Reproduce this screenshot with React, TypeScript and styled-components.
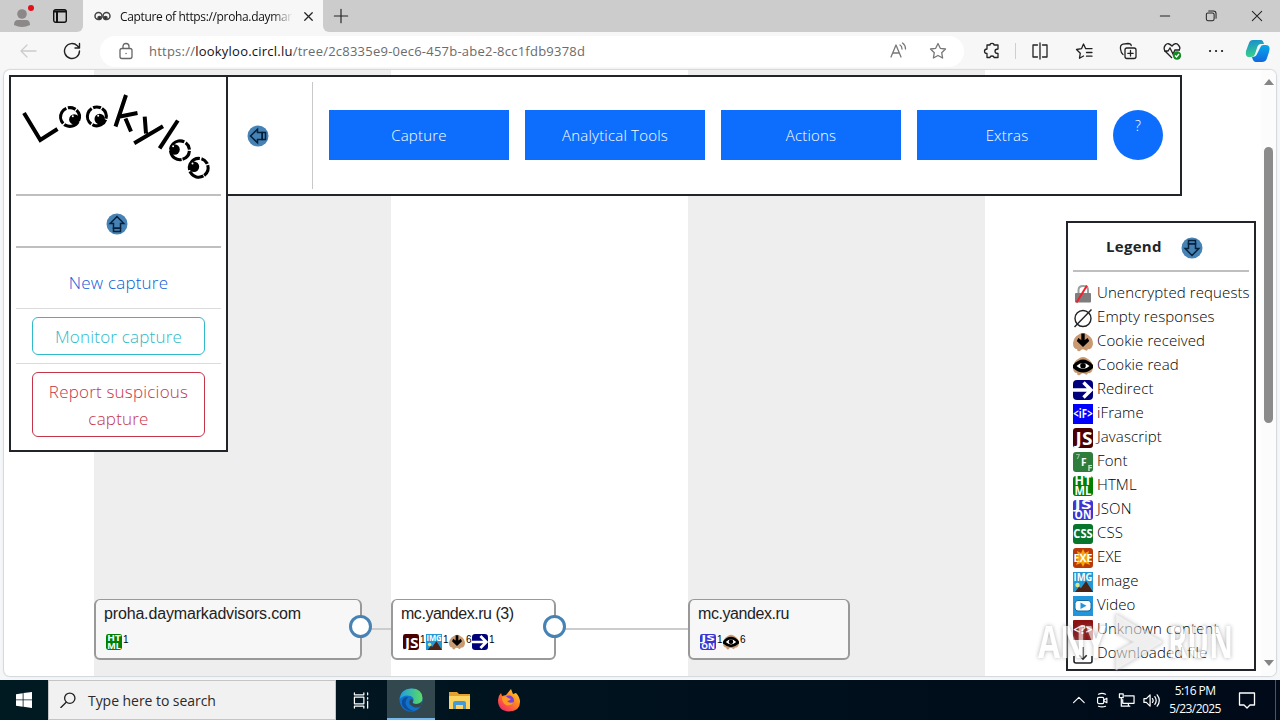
import type { ReactNode } from "react";
import { styled, createGlobalStyle } from "styled-components";

const GlobalStyle = createGlobalStyle`
    * { box-sizing: border-box; }
    body {
        margin: 0;
        overflow: hidden;
        font-family: "Open Sans", "Noto Sans", sans-serif;
    }
    svg { display: block; flex: none; }
`;

const Screen = styled.div`
    display: flex;
    flex-direction: column;
    width: 1280px;
    height: 720px;
    background: #f4f6f8;
`;

/* browser */

const TabBar = styled.div`
    display: flex;
    height: 32px;
    background: #f7f7f7;
`;

const TabBarLeft = styled.div`
    display: flex;
    align-items: center;
    gap: 19px;
    width: 83px;
    padding-left: 13px;
    background: #cccccc;
    border-radius: 0 0 6px 0;
`;

const Tab = styled.div`
    display: flex;
    align-items: center;
    width: 240px;
    padding: 0 7px 0 11px;
`;

const TabTitle = styled.div`
    flex: 1;
    margin: 0 8px 0 9px;
    overflow: hidden;
    white-space: nowrap;
    font-size: 12px;
    letter-spacing: -0.35px;
    color: #111;
    mask-image: linear-gradient(to right, #000 88%, transparent);
`;

const TabBarRight = styled.div`
    display: flex;
    flex: 1;
    align-items: center;
    justify-content: space-between;
    padding: 0 16px 0 10px;
    background: #cccccc;
    border-radius: 0 0 0 6px;
`;

const WindowButtons = styled.div`
    display: flex;
    gap: 32px;
`;

const Toolbar = styled.div`
    display: flex;
    align-items: center;
    height: 38px;
    background: #f7f7f7;
`;

const ToolbarButtons = styled.div`
    display: flex;
    align-items: center;
    gap: 26px;
    width: 100px;
    padding-left: 19px;
`;

const AddressBar = styled.div`
    display: flex;
    align-items: center;
    width: 864px;
    height: 31px;
    padding: 0 17px;
    border-radius: 16px;
    background: #fff;
`;

const Address = styled.div`
    flex: 1;
    margin-left: 14px;
    font-size: 13px;
    letter-spacing: 0.23px;
    color: #6b6b6b;

    b {
        font-weight: 400;
        color: #111;
    }
`;

const AddressIcons = styled.div`
    display: flex;
    gap: 22px;
`;

const ToolbarActions = styled.div`
    display: flex;
    align-items: center;
    gap: 26px;
    padding-left: 19px;

    svg:last-child { margin-left: -6px; }
`;

const Separator = styled.div`
    width: 1px;
    height: 16px;
    margin: 0 -11px 0 -12px;
    background: #cfcfcf;
`;

const Viewport = styled.div`
    position: relative;
    display: flex;
    height: 606px;
    margin: 0 4px 4px;
    overflow: hidden;
    background: #fff;
    border-radius: 6px;
    box-shadow: 0 0 1px 1px #d4d7da;
`;

const Stripes = styled.div`
    display: grid;
    flex: 1;
    grid-template-columns: 297px 297px 297px;
    margin-left: 90px;
`;

const Stripe = styled.div<{ $gray?: boolean }>`
    background: ${({ $gray }) => ($gray ? "#eeeeee" : "#ffffff")};
`;

const Scrollbar = styled.div`
    display: flex;
    flex-direction: column;
    align-items: center;
    width: 15px;
    padding: 9px 0 10px;
    background: #fcfcfc;
`;

const ScrollThumb = styled.div`
    width: 9px;
    height: 276px;
    margin: 62px 0 auto;
    border-radius: 5px;
    background: #8b8b8b;
`;

/* tree nodes on the canvas */

const Node = styled.div<{ $x: number; $width: number }>`
    position: absolute;
    left: ${({ $x }) => $x}px;
    top: 529px;
    width: ${({ $width }) => $width}px;
    height: 61px;
    padding: 5px 8px;
    border: 2px solid #999;
    border-top-width: 1.5px;
    border-radius: 6px;
    background: rgba(255, 255, 255, 0.5);
`;

const NodeName = styled.div<{ $spacing: number }>`
    height: 18px;
    white-space: nowrap;
    font: 16px/18px "Liberation Sans", sans-serif;
    letter-spacing: ${({ $spacing }) => $spacing}px;
    color: #222;
`;

const NodeIcons = styled.div`
    display: flex;
    gap: 1px;
    margin: 11px 0 0 2px;
`;

const NodeIcon = styled.div`
    display: flex;
    gap: 1px;
    width: 22px;
    font: 10px/12px "Liberation Sans", sans-serif;
    color: #000;
`;

const Link = styled.div<{ $x: number; $width: number }>`
    position: absolute;
    left: ${({ $x }) => $x}px;
    top: 558px;
    width: ${({ $width }) => $width}px;
    height: 2px;
    background: #ccc;
`;

const NodeToggle = styled.div<{ $x: number }>`
    position: absolute;
    left: ${({ $x }) => $x}px;
    top: 545px;
    width: 23px;
    height: 23px;
    border: 3px solid steelblue;
    border-radius: 50%;
    background: #fff;
`;

/* floating panels */

const Panel = styled.div`
    position: absolute;
    border: 2px solid #212529;
    background: #fff;
    color: #212529;
`;

const SidePanel = styled(Panel)`
    left: 5px;
    top: 5px;
    display: flex;
    flex-direction: column;
    align-items: center;
    width: 219px;
    height: 377px;
    padding: 5px;
`;

const MenuPanel = styled(Panel)`
    left: 222px;
    top: 5px;
    display: flex;
    align-items: flex-start;
    gap: 16px;
    width: 956px;
    height: 121px;
    padding: 5px 16px 5px 0;
`;

const MenuHandle = styled.div`
    display: flex;
    align-items: center;
    width: 85px;
    height: 107px;
    padding: 0 0 0 19px;
    border-right: 1px solid #c8c8c8;
`;

const MenuButton = styled.div`
    width: 180px;
    height: 50px;
    margin-top: 28px;
    background: #0d6efd;
    color: #fff;
    font-size: 15px;
    font-weight: 300;
    line-height: 51px;
    letter-spacing: 0.2px;
    text-align: center;
`;

const HelpButton = styled(MenuButton)`
    width: 50px;
    border-radius: 50%;
    font-size: 14px;
    line-height: 31px;
`;

const Rule = styled.div<{ $thin?: boolean }>`
    width: 100%;
    height: ${({ $thin }) => ($thin ? 1 : 2)}px;
    background: ${({ $thin }) => ($thin ? "#dcdcdc" : "#bfbfbf")};
`;

const LogoArea = styled.div`
    height: 112px;
`;

const HandleArea = styled.div`
    display: flex;
    align-items: center;
    justify-content: center;
    width: 100%;
    height: 51px;
    padding: 6px 3px 0 0;
`;

const SideLink = styled.div`
    height: 60px;
    padding-top: 21px;
    font-size: 17px;
    font-weight: 300;
    line-height: 27px;
    letter-spacing: 0.2px;
    color: #0b5ed7;
`;

const OutlineButton = styled.div<{ $color: string }>`
    width: 173px;
    margin: 8px 0;
    padding: 4.5px 8px;
    border: 1px solid ${({ $color }) => $color};
    border-radius: 6px;
    color: ${({ $color }) => $color};
    font-size: 17px;
    font-weight: 300;
    line-height: 27px;
    letter-spacing: 0.2px;
    text-align: center;
`;

const LegendPanel = styled(Panel)`
    left: 1062px;
    top: 151px;
    width: 190px;
    height: 450px;
    padding: 5px;
`;

const LegendHeader = styled.div`
    display: flex;
    align-items: center;
    gap: 19px;
    height: 42px;
    padding: 0 0 6px 33px;
    font-size: 15px;
    font-weight: 700;
    letter-spacing: 0.3px;

    svg { margin-top: 4px; }
`;

const LegendList = styled.div`
    margin-top: 8px;
`;

const LegendRow = styled.div`
    display: flex;
    align-items: center;
    gap: 4px;
    height: 24px;
    white-space: nowrap;
    font-size: 15px;
    font-weight: 300;
    line-height: 24px;
    letter-spacing: 0.1px;
    color: #000;

    svg { margin-top: 4px; }
`;

const Watermark = styled.svg`
    position: absolute;
    left: 1030px;
    top: 538px;
    opacity: 0.65;
    filter: drop-shadow(0 0 2px #888);
`;

/* windows taskbar */

const Taskbar = styled.div`
    display: flex;
    height: 40px;
    background: linear-gradient(to right, #001a22, #00121e 50%, #000a18);
`;

const TaskbarButton = styled.div<{ $active?: boolean; $width?: number }>`
    display: flex;
    align-items: center;
    justify-content: center;
    width: ${({ $width = 49 }) => $width}px;
    height: 40px;
    background: ${({ $active }) => ($active ? "#33474e" : "transparent")};
    box-shadow: ${({ $active }) => ($active ? "inset 0 -2px #76b9ed" : "none")};
`;

const SearchBox = styled.div`
    display: flex;
    align-items: center;
    gap: 12px;
    width: 288px;
    padding-left: 11px;
    border: 1px solid #c4c4c4;
    background: #f1f1f1;
    color: #2a2a2a;
    font-size: 14px;
    letter-spacing: -0.05px;
`;

const Tray = styled.div`
    display: flex;
    align-items: center;
    gap: 8px;
    margin-left: auto;
    padding-right: 4px;
    color: #fff;
`;

const Clock = styled.div`
    width: 54px;
    margin-right: 8px;
    font-size: 12px;
    line-height: 18px;
    letter-spacing: -0.6px;
    text-align: center;
    white-space: nowrap;
`;

const TrayEdge = styled.div`
    width: 1px;
    height: 40px;
    margin-left: 11px;
    background: #4a5560;
`;

function Icon({ size = 18, color = "#222", width = 1.3, children }: IconProps) {
    return (
        <svg width={size} height={size} viewBox="0 0 18 18" fill="none" stroke={color}
            strokeWidth={width} strokeLinecap="round" strokeLinejoin="round">
            {children}
        </svg>
    )
}

function HandleIcon({ angle }: { angle: number }) {
    return (
        <svg width="22" height="22" viewBox="0 0 22 22">
            <circle cx="11" cy="11" r="10.5" fill="steelblue" />
            <g transform={`rotate(${angle} 11 11)`} fill="none" stroke="#06213c" strokeWidth="1.5">
                <path d="M11 3.5 4.2 10.5h3.3v4.7h7v-4.7h3.3z" />
                <path d="M7.5 15.2h7v3.3h-7z" />
            </g>
        </svg>
    )
}

function Eye({ x, y, px, py, turn }: EyeProps) {
    return (
        <g>
            <circle cx={x} cy={y} r="9.4" fill="none" stroke="#000" strokeWidth="3.1"
                strokeDasharray="16 1.4 18 1.6 8 1.3 11.4 1.4" transform={`rotate(${turn} ${x} ${y})`} />
            <circle cx={px} cy={py} r="5.2" fill="#000" />
            <circle cx={px - 1.5} cy={py - 3.2} r="1" fill="#fff" />
        </g>
    )
}

function Logo() {
    return (
        <svg width="205" height="112" viewBox="16 82 205 112">
            <g fill="none" stroke="#000" strokeWidth="4">
                <path d="M24 113 40.3 140 57.5 129" />
                <path d="M126 95 115.5 126.5M117.5 117 137.5 113M125.5 118.5 131 131.5" />
                <path d="M144.7 116.7 146 133.5M163 126.3 134.2 143.3" />
                <path d="M177.8 120.5 159.6 148.3" />
            </g>
            <Eye x={70} y={117} px={74.3} py={119.4} turn={30} />
            <Eye x={96.8} y={116.4} px={99.7} py={119} turn={20} />
            <Eye x={180} y={150.3} px={174.6} py={149.5} turn={80} />
            <Eye x={198.7} y={167.8} px={194} py={166.7} turn={60} />
        </svg>
    )
}

function TextIcon({ size, bg, lines, fontSize, radius = 3 }: TextIconProps) {
    const top = lines.length === 1 ? [14.3] : [9.2, 19.2];
    return (
        <svg width={size} height={size} viewBox="0 0 20 20">
            <rect width="20" height="20" rx={radius} fill={bg} />
            {lines.map((line, i) => (
                <text key={line} x="10" y={top[i]} fill="#fff" textAnchor="middle" fontWeight="700"
                    fontFamily="Open Sans" fontSize={fontSize} textLength={line.length > 2 ? 19.5 : 17}
                    lengthAdjust="spacingAndGlyphs">{line}</text>
            ))}
        </svg>
    )
}

function Cookie({ size, children }: { size: number; children: ReactNode }) {
    return (
        <svg width={size} height={size} viewBox="0 0 20 20">
            <path d="M5 3Q10-1 15 3q5 3 5 9-1 6-5 5-1 3-3 1-3-2-5 1-3 1-3-2Q0 17 0 11 1 5 5 3z" fill="#c99a72" />
            {children}
        </svg>
    )
}

function ResourceIcon({ type, size = 20 }: { type: string; size?: number }) {
    switch (type) {
        case "insecure":
            return (
                <svg width={size} height={size} viewBox="0 0 20 20">
                    <path d="M5.5 10V6q0-4 4.7-4 4.8 0 4.8 4v4" fill="none" stroke="#98a0a0" strokeWidth="2" />
                    <rect x="2" y="9" width="16" height="9.5" rx="1" fill="#7d7d7d" />
                    <path d="M14 1.500 3.500 18.500" stroke="#f0202d" strokeWidth="2" />
                </svg>
            )
        case "empty":
            return (
                <svg width={size} height={size} viewBox="0 0 20 20" fill="none" stroke="#222" strokeWidth="1.4">
                    <circle cx="10" cy="10.5" r="8" />
                    <path d="M18.5 1.5 1.5 19" />
                </svg>
            )
        case "received":
            return <Cookie size={size}><path d="M8.300 1.500h3.400v6.500l3-2 1.500 3L10 15 3.800 9l1.500-3 3 2z" fill="#000" /></Cookie>
        case "read":
            return (
                <Cookie size={size}>
                    <path d="M0 9Q10-2 20 9v3Q10 21 0 12z" fill="#000" />
                    <path d="M3.5 10Q10 4 16.5 10 10 16 3.5 10z" fill="#fff" />
                    <circle cx="10" cy="9.8" r="2.8" fill="#000" />
                </Cookie>
            )
        case "redirect":
            return (
                <svg width={size} height={size} viewBox="0 0 20 20">
                    <rect width="20" height="20" rx="4" fill="#00007c" />
                    <path d="M0 10h17M10.5 2.500l7.500 7.500-7.500 7.500" fill="none" stroke="#fff" strokeWidth="3.4" />
                </svg>
            )
        case "iframe":
            return <TextIcon size={size} bg="#0000ff" lines={["<iF>"]} fontSize={12} radius={0} />
        case "js":
            return (
                <svg width={size} height={size} viewBox="0 0 20 20">
                    <rect width="20" height="20" rx="3" fill="#480000" />
                    <text x="2.500" y="17" fill="#fff" fontFamily="Open Sans" fontWeight="700" fontSize="18"
                        textLength="17" lengthAdjust="spacingAndGlyphs">JS</text>
                </svg>
            )
        case "font":
            return (
                <svg width={size} height={size} viewBox="0 0 20 20" fill="#fff" fontFamily="Open Sans" fontWeight="700">
                    <rect width="20" height="20" rx="3" fill="#2f7d3c" />
                    <text x="3" y="7" fontSize="7" opacity="0.5">7</text>
                    <text x="8" y="13.500" fontSize="10">F</text>
                    <text x="14.5" y="18.5" fontSize="9" opacity="0.75">F</text>
                </svg>
            )
        case "html":
            return <TextIcon size={size} bg="#008000" lines={["HT", "ML"]} fontSize={12} />
        case "json":
            return <TextIcon size={size} bg="#3c35d2" lines={["JS", "ON"]} fontSize={12} />
        case "css":
            return <TextIcon size={size} bg="#08752c" lines={["CSS"]} fontSize={12} />
        case "exe":
            return (
                <svg width={size} height={size} viewBox="0 0 20 20">
                    <rect width="20" height="20" rx="3" fill="#b83a08" />
                    <path d="M10 1l2 4 4-2-1 4 4 3-4 2 2 5-5-2-2 4-2-4-5 2 2-5-4-2 4-3-1-4 4 2z" fill="#f6a312" />
                    <text x="0.5" y="13.8" fill="#fff" fontFamily="Open Sans" fontWeight="700" fontSize="11"
                        textLength="19" lengthAdjust="spacingAndGlyphs">EXE</text>
                </svg>
            )
        case "image":
            return (
                <svg width={size} height={size} viewBox="0 0 20 20">
                    <rect width="20" height="20" fill="#2298d4" />
                    <circle cx="4.5" cy="13" r="2.2" fill="#d9e58a" />
                    <path d="M2 20l4-5 2 1 5-7 7 11z" fill="#4b2415" />
                    <text x="0.5" y="8.500" fill="#fff" fontFamily="Open Sans" fontWeight="700" fontSize="10"
                        textLength="19" lengthAdjust="spacingAndGlyphs">IMG</text>
                </svg>
            )
        case "video":
            return (
                <svg width={size} height={size} viewBox="0 0 20 20">
                    <rect width="20" height="20" fill="#2196dc" />
                    <rect x="2" y="4.500" width="16" height="10.5" rx="3" fill="#fff" stroke="#176a9c" />
                    <path d="M7.5 6.500l6 3.300-6 3.200z" fill="#2196dc" />
                </svg>
            )
        case "unknown":
            return <TextIcon size={size} bg="#8c1212" lines={["<?>"]} fontSize={13} radius={1} />
        default:
            return (
                <svg width={size} height={size} viewBox="0 0 20 20" fill="none" stroke="#222" strokeWidth="1.6">
                    <path d="M1 12v5q0 2 2 2h14q2 0 2-2v-5M10 3v12M6.3 11.3 10 15l3.7-3.7" />
                </svg>
            )
    }
}

const legend = [
    { type: "insecure", label: "Unencrypted requests" },
    { type: "empty", label: "Empty responses" },
    { type: "received", label: "Cookie received" },
    { type: "read", label: "Cookie read" },
    { type: "redirect", label: "Redirect" },
    { type: "iframe", label: "iFrame" },
    { type: "js", label: "Javascript" },
    { type: "font", label: "Font" },
    { type: "html", label: "HTML" },
    { type: "json", label: "JSON" },
    { type: "css", label: "CSS" },
    { type: "exe", label: "EXE" },
    { type: "image", label: "Image" },
    { type: "video", label: "Video" },
    { type: "unknown", label: "Unknown content" },
    { type: "download", label: "Downloaded file" },
];

const nodes: TreeNode[] = [
    { name: "proha.daymarkadvisors.com", x: 90, width: 268, spacing: -0.16, icons: [["html", 1]] },
    { name: "mc.yandex.ru (3)", x: 387, width: 165, spacing: -0.46, icons: [["js", 1], ["image", 1], ["received", 6], ["redirect", 1]] },
    { name: "mc.yandex.ru", x: 684, width: 162, spacing: -0.42, icons: [["json", 1], ["read", 6]] },
];

function BrowserTabs() {
    return (
        <TabBar>
            <TabBarLeft>
                <svg width="21" height="24" viewBox="0 0 21 24">
                    <circle cx="9" cy="10" r="4.8" fill="#8b8887" />
                    <path d="M1 21q0-5 4-5h8q4 0 4 5-8 4-16 0z" fill="#8b8887" />
                    <circle cx="18" cy="4" r="3" fill="#e3101c" />
                </svg>
                <svg width="14" height="14" viewBox="0 0 14 14" fill="none" stroke="#111" strokeWidth="1.4">
                    <rect x=".7" y=".7" width="12.6" height="12.6" rx="2" />
                    <path d="M1 2.5h12M4 3v10" strokeWidth="2" />
                </svg>
            </TabBarLeft>
            <Tab>
                <svg width="17" height="12" viewBox="0 0 17 12" fill="none" stroke="#444" strokeWidth="1.5">
                    <circle cx="4.5" cy="6" r="3.5" />
                    <circle cx="12.5" cy="6" r="3.5" />
                    <circle cx="5.500" cy="8" r="1.500" fill="#222" />
                    <circle cx="11.500" cy="8" r="1.500" fill="#222" />
                </svg>
                <TabTitle>Capture of https://proha.daymar</TabTitle>
                <Icon size={15} color="#222" width={1.5}><path d="M4.5 4.5l9 9M13.5 4.5l-9 9" /></Icon>
            </Tab>
            <TabBarRight>
                <Icon size={16}><path d="M9 1.5v15M1.5 9h15" /></Icon>
                <WindowButtons>
                    <Icon size={14}><path d="M3 9h12" /></Icon>
                    <Icon size={14}><rect x="3" y="5" width="10" height="10" rx="2" /><path d="M6 2.5h6q3.500 0 3.500 3.500v6" /></Icon>
                    <Icon size={14}><path d="M3 3l12 12M15 3L3 15" /></Icon>
                </WindowButtons>
            </TabBarRight>
        </TabBar>
    )
}

function BrowserToolbar() {
    return (
        <Toolbar>
            <ToolbarButtons>
                <Icon color="#ccc"><path d="M17 9H2M8 3L2 9l6 6" /></Icon>
                <Icon width={1.4}><path d="M16.5 9a7.5 7.5 0 1 1-2.2-5.3L16.5 6M16.5 1.5V6H12" /></Icon>
            </ToolbarButtons>
            <AddressBar>
                <Icon color="#666"><rect x="3" y="6.5" width="12" height="10" rx="2" /><path d="M6 6V4.5q0-3 3-3t3 3V6M9 11.5h.1" /></Icon>
                <Address>https://<b>lookyloo.circl.lu</b>/tree/2c8335e9-0ec6-457b-abe2-8cc1fdb9378d</Address>
                <AddressIcons>
                    <Icon color="#777"><path d="M2 15L7 3l5 12M4 11h6M11 3q2 1 2 4M13.5 1q3 2 3 6" /></Icon>
                    <Icon color="#777"><path d="M9 1.5l2.3 4.8 5.2.7-3.8 3.700.9 5.300L9 13.5 4.400 16l.9-5.300L1.500 7l5.200-.7z" /></Icon>
                </AddressIcons>
            </AddressBar>
            <ToolbarActions>
                <Icon><path d="M4 3h3q0-1.700 2-1.700T11 3h4v4q-3 0-3 2.200T15 11.500v4h-4q0-1.500-2-1.500t-2 1.500H4v-4q-2.500 0-2.500-2.200T4 7z" /></Icon>
                <Separator />
                <Icon><path d="M6.500 3H2v12h4.500M11.500 3H16v12h-4.500M9 1v16" /></Icon>
                <Icon><path d="M8.500 14l-4 2.200.8-5L1.500 7.500l5-.8L8.500 2l2.200 4.700H17M11.500 10.500H17M11.500 14.200H17" /></Icon>
                <Icon><rect x="6" y="6" width="11" height="10.5" rx="2" /><path d="M11.500 8.500v5.500M8.800 11.300h5.400M4 12.500Q2 11 1.500 7 1 3 4 2.200l5-.7q3 0 3.200 2" /></Icon>
                <svg width="18" height="18" viewBox="0 0 18 18" fill="none" stroke="#222" strokeWidth="1.3">
                    <path d="M9 16L2 9Q0 6 2.500 3T9 4q3.500-4 6.300-1T16 8M1 9h4l2-3 3 6 2-4h5" />
                    <circle cx="14" cy="13.5" r="4.2" fill="#138a20" stroke="none" />
                    <path d="M12 13.500l1.500 1.500 2.500-3" stroke="#fff" />
                </svg>
                <Icon width={2.2}><path d="M3 9h.1M9 9h.1M15 9h.1" /></Icon>
                <svg width="26" height="24" viewBox="0 0 26 24">
                    <defs>
                        <linearGradient id="copilotA" x1="0" y1="0" x2="0.2" y2="1">
                            <stop offset="0" stopColor="#158bd4" /><stop offset="1" stopColor="#38cf8a" />
                        </linearGradient>
                        <linearGradient id="copilotB" x1="0" y1="0" x2="0" y2="1">
                            <stop offset="0" stopColor="#08a9ea" /><stop offset="1" stopColor="#1267df" />
                        </linearGradient>
                    </defs>
                    <path d="M8 1h8q2 0 3 4h-3q-3 0-4 4l-2 6q-1 3-4 3H4q-4 0-3-6L4 4q1-3 4-3z" fill="url(#copilotA)" />
                    <path d="M18 6h3q5 0 3 7l-2 6q-1 4-5 4h-6q-3 0-4-5 4 0 5-3l3-6q1-3 3-3z" fill="url(#copilotB)" />
                </svg>
            </ToolbarActions>
        </Toolbar>
    )
}

function CaptureTree() {
    return (
        <>
            <Link $x={356} $width={31} />
            <Link $x={551} $width={133} />
            {nodes.map(node => (
                <Node key={node.x} $x={node.x} $width={node.width}>
                    <NodeName $spacing={node.spacing}>{node.name}</NodeName>
                    <NodeIcons>
                        {node.icons.map(([type, count]) => (
                            <NodeIcon key={type}><ResourceIcon type={type} size={16} />{count}</NodeIcon>
                        ))}
                    </NodeIcons>
                </Node>
            ))}
            <NodeToggle $x={345} />
            <NodeToggle $x={539} />
        </>
    )
}

function PageViewport() {
    return (
        <Viewport>
            <Stripes>
                <Stripe $gray />
                <Stripe />
                <Stripe $gray />
            </Stripes>
            <Scrollbar>
                <svg width="10" height="6" viewBox="0 0 10 6"><path d="M0 6l5-6 5 6z" fill="#858585" /></svg>
                <ScrollThumb />
                <svg width="10" height="6" viewBox="0 0 10 6"><path d="M0 0l5 6 5-6z" fill="#858585" /></svg>
            </Scrollbar>
            <CaptureTree />
            <MenuPanel>
                <MenuHandle><HandleIcon angle={-90} /></MenuHandle>
                <MenuButton>Capture</MenuButton>
                <MenuButton>Analytical Tools</MenuButton>
                <MenuButton>Actions</MenuButton>
                <MenuButton>Extras</MenuButton>
                <HelpButton>?</HelpButton>
            </MenuPanel>
            <SidePanel>
                <LogoArea><Logo /></LogoArea>
                <Rule />
                <HandleArea><HandleIcon angle={0} /></HandleArea>
                <Rule />
                <SideLink>New capture</SideLink>
                <Rule $thin />
                <OutlineButton $color="#2fb9c9">Monitor capture</OutlineButton>
                <Rule $thin />
                <OutlineButton $color="#c5354a">Report suspicious capture</OutlineButton>
            </SidePanel>
            <LegendPanel>
                <LegendHeader>Legend<HandleIcon angle={180} /></LegendHeader>
                <Rule />
                <LegendList>
                    {legend.map(({ type, label }) => (
                        <LegendRow key={type}><ResourceIcon type={type} />{label}</LegendRow>
                    ))}
                </LegendList>
            </LegendPanel>
            <Watermark width="204" height="66" viewBox="0 0 204 66" fill="#fff"
                fontFamily="Open Sans" fontWeight="700" fontSize="44">
                <text x="4" y="50" textLength="68" lengthAdjust="spacingAndGlyphs">ANY</text>
                <path d="M82 6l47 28-47 28V44l18-10-18-10z" fillOpacity=".7" stroke="#ddd" />
                <text x="134" y="50" textLength="65" lengthAdjust="spacingAndGlyphs">RUN</text>
            </Watermark>
        </Viewport>
    )
}

function WindowsTaskbar() {
    return (
        <Taskbar>
            <TaskbarButton $width={48}>
                <svg width="16" height="16" viewBox="0 0 16 16" fill="#fff">
                    <path d="M0 2.200l6.700-1v6.300H0zM7.500 1.100L16 0v7.500H7.500zM0 8.300h6.700v6.400L0 13.700zM7.500 8.300H16V16l-8.500-1.200z" />
                </svg>
            </TaskbarButton>
            <SearchBox>
                <Icon size={16} width={1.5}><circle cx="11" cy="7" r="5.8" /><path d="M7 11.500L1 17.500" /></Icon>
                Type here to search
            </SearchBox>
            <TaskbarButton $width={51}>
                <Icon size={17} color="#fff" width={1.3}><path d="M1.500 1v2h10V1M1.500 5.500h10v7h-10zM1.500 17v-2h10v2M15.500 1v2M15.500 10v7M15.500 6v1.500" /></Icon>
            </TaskbarButton>
            <TaskbarButton $active $width={48}>
                <svg width="24" height="24" viewBox="0 0 24 24">
                    <defs>
                        <linearGradient id="edgeTop"><stop stopColor="#1d9de2" /><stop offset="1" stopColor="#5bdc63" /></linearGradient>
                    </defs>
                    <circle cx="12" cy="12" r="11.5" fill="#1271c8" />
                    <path d="M.5 11Q2 .5 12.500.5T23.500 10q0 6-6 6-5 0-3-3 1-3-3-5-6-2-11 3z" fill="url(#edgeTop)" />
                    <path d="M9 9q-5 6 0 11 4 4 8 2-4 2-9 0-6-3-5-9 1-4 6-4z" fill="#0c4f9c" />
                    <path d="M12 11q-4 4 1 7 4 3 9 0l1-5q-2 3-6 3-5 0-3-3 0-2-2-2z" fill="#33474e" />
                </svg>
            </TaskbarButton>
            <TaskbarButton>
                <svg width="21" height="19" viewBox="0 0 21 19">
                    <path d="M0 1h8l2 2h11v15H0z" fill="#e5a02d" />
                    <path d="M0 5h21v13H0z" fill="#fcd462" />
                    <path d="M4 18v-6q0-2 2-2h9q2 0 2 2v6h-3v-4H7v4z" fill="#459bd5" />
                </svg>
            </TaskbarButton>
            <TaskbarButton>
                <svg width="22" height="24" viewBox="0 0 22 24">
                    <defs>
                        <linearGradient id="fox" x1="1" y1="0" x2="0.2" y2="1">
                            <stop stopColor="#ffe040" /><stop offset=".45" stopColor="#ff8a20" /><stop offset="1" stopColor="#f42765" />
                        </linearGradient>
                    </defs>
                    <path d="M3 5l1 3 4-1 5-6 2 5 3-1q4 4 4 9 0 9-11 9.500Q0 23 0 12q0-4 3-7z" fill="url(#fox)" />
                    <circle cx="11" cy="12.5" r="5" fill="#7a3fe0" />
                    <path d="M4 9q4-2 6 1l3 1q-2 2-4 2 3 3 7 1-3 5-8 3-4-2-4-8z" fill="#ff9b22" />
                </svg>
            </TaskbarButton>
            <Tray>
                <Icon size={16} color="#fff"><path d="M4 12l6-6 6 6" /></Icon>
                <Icon size={16} color="#fff"><rect x="4" y="6" width="7" height="7" rx="1.5" /><path d="M11 9l3.500-2v5L11 10M5 2.500q4-2 8 0M5 16q4 1.500 8 0" /></Icon>
                <Icon size={17} color="#fff"><path d="M7 4h10v8H5V8M1.500 2h4v4h-4zM3.500 6v9h9M11 12v3" /></Icon>
                <Icon size={17} color="#fff"><path d="M1 7v4h2.500L7.500 15V3L3.500 7zM10 7q1.500 2 0 4M12.500 5q3 4 0 8M15 3q4.500 6 0 12" /></Icon>
                <Clock>5:16 PM<br />5/23/2025</Clock>
                <Icon size={18} color="#fff"><path d="M1.500 2h15v12H12l-3 3-3-3H1.500z" /></Icon>
                <TrayEdge />
            </Tray>
        </Taskbar>
    )
}

export default function App() {
    return (
        <Screen>
            <GlobalStyle />
            <BrowserTabs />
            <BrowserToolbar />
            <PageViewport />
            <WindowsTaskbar />
        </Screen>
    )
}

interface IconProps {
    size?: number;
    color?: string;
    width?: number;
    children: ReactNode;
}

interface EyeProps {
    x: number;
    y: number;
    px: number;
    py: number;
    turn: number;
}

interface TextIconProps {
    size: number;
    bg: string;
    lines: string[];
    fontSize: number;
    radius?: number;
}

interface TreeNode {
    name: string;
    x: number;
    width: number;
    spacing: number;
    icons: [string, number][];
}
